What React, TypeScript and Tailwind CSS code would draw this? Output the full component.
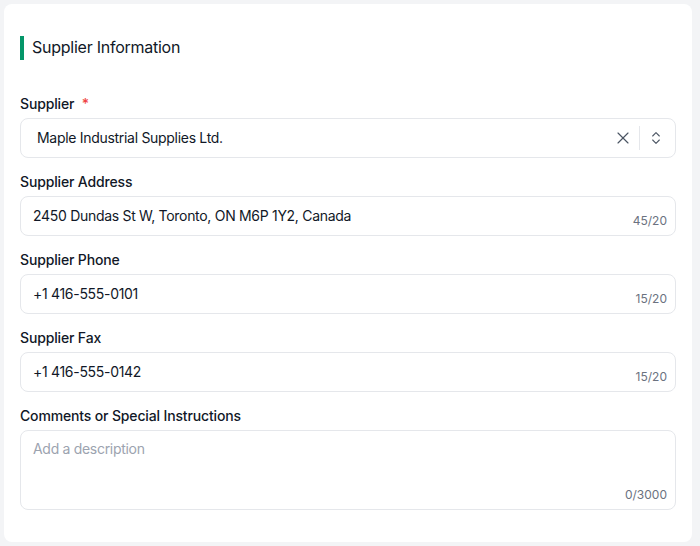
import { X, ChevronsUpDown } from 'lucide-react';

interface TextFieldProps {
  label: string;
  value: string;
  max: number;
}

function TextField({ label, value, max }: TextFieldProps): JSX.Element {
  return (
    <div className="flex flex-col gap-1">
      <label className="text-sm leading-5 font-medium tracking-[-0.15px] text-[#111827]">{label}</label>
      <div className="relative h-10 rounded-lg border border-[#e5e7eb] bg-white">
        <input
          readOnly
          value={value}
          className="h-full w-full bg-transparent px-3 pb-px text-sm tracking-[-0.3px] text-[#111827] outline-none"
        />
        <span className="absolute right-2 bottom-[6px] text-xs leading-4 text-[#6b7280]">
          {value.length}/{max}
        </span>
      </div>
    </div>
  );
}

export default function App(): JSX.Element {
  return (
    <div
      className="min-h-[546px] bg-[#f3f4f6] pt-1 pr-2 pb-1 pl-1"
      style={{ fontFamily: 'Inter, "Noto Sans", sans-serif' }}
    >
      <section className="rounded-lg bg-white px-4 pt-8 pb-8">
        {/* Section title */}
        <div className="flex h-6 items-center gap-2">
          <span className="h-6 w-1 bg-[#059669]" />
          <h2 className="-mt-0.5 text-base leading-6 font-normal tracking-[-0.25px] text-[#111827]">
            Supplier Information
          </h2>
        </div>

        <div className="mt-[34px] flex flex-col gap-[14px]">
          {/* Supplier select */}
          <div className="flex flex-col gap-1">
            <label className="text-sm leading-5 font-medium tracking-[-0.15px] text-[#111827]">
              Supplier <span className="ml-1 text-[#ef4444]">*</span>
            </label>
            <div className="flex h-10 items-center rounded-lg border border-[#e5e7eb] bg-white pl-4 pr-[11px]">
              <span className="flex-1 pb-px text-sm tracking-[-0.3px] text-[#111827]">
                Maple Industrial Supplies Ltd.
              </span>
              <X size={20} strokeWidth={1.4} className="text-[#4b5563]" />
              <span className="mr-2 ml-[6px] h-6 w-px bg-[#e5e7eb]" />
              <ChevronsUpDown size={16} strokeWidth={1.6} className="text-[#4b5563]" />
            </div>
          </div>

          <TextField label="Supplier Address" value="2450 Dundas St W, Toronto, ON M6P 1Y2, Canada" max={20} />
          <TextField label="Supplier Phone" value="+1 416-555-0101" max={20} />
          <TextField label="Supplier Fax" value="+1 416-555-0142" max={20} />

          {/* Comments */}
          <div className="flex flex-col gap-1">
            <label className="text-sm leading-5 font-medium tracking-[-0.15px] text-[#111827]">
              Comments or Special Instructions
            </label>
            <div className="relative h-20 rounded-lg border border-[#e5e7eb] bg-white">
              <textarea
                readOnly
                placeholder="Add a description"
                className="h-full w-full resize-none bg-transparent px-3 py-2 text-sm tracking-[-0.3px] text-[#111827] outline-none placeholder:text-[#9ca3af]"
              />
              <span className="absolute right-2 bottom-[6px] text-xs leading-4 text-[#6b7280]">0/3000</span>
            </div>
          </div>
        </div>
      </section>
    </div>
  );
}
